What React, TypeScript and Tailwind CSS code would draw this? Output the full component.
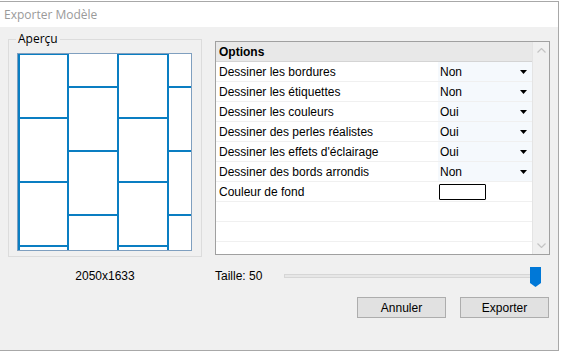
const rows: { label: string; value?: string }[] = [
  { label: 'Dessiner les bordures', value: 'Non' },
  { label: 'Dessiner les étiquettes', value: 'Non' },
  { label: 'Dessiner les couleurs', value: 'Oui' },
  { label: 'Dessiner des perles réalistes', value: 'Oui' },
  { label: "Dessiner les effets d'éclairage", value: 'Oui' },
  { label: 'Dessiner des bords arrondis', value: 'Non' },
  { label: 'Couleur de fond' },
  { label: '' },
  { label: '' },
];

function Preview() {
  const blue = '#0a7ec2';
  // staggered brick pattern, columns 50px wide, rows 64px tall
  const cols = [
    { x1: 1, x2: 51, ys: [1, 65, 129, 193] },
    { x1: 51, x2: 101, ys: [34, 98, 162] },
    { x1: 101, x2: 151, ys: [1, 65, 129, 193] },
    { x1: 151, x2: 175, ys: [34, 98, 162] },
  ];
  return (
    <svg width="175" height="198" viewBox="0 0 175 198" className="block">
      <rect x="0" y="0" width="175" height="198" fill="#ffffff" />
      {cols.map((c, i) =>
        c.ys.map((y) => <line key={`${i}-${y}`} x1={c.x1} x2={c.x2} y1={y} y2={y} stroke={blue} strokeWidth="2" />)
      )}
      <line x1="2" x2="2" y1="0" y2="198" stroke={blue} strokeWidth="2" />
      <line x1="51" x2="51" y1="0" y2="198" stroke={blue} strokeWidth="2" />
      <line x1="101" x2="101" y1="0" y2="198" stroke={blue} strokeWidth="2" />
      <line x1="151" x2="151" y1="0" y2="198" stroke={blue} strokeWidth="2" />
      <rect x="0.5" y="0.5" width="174" height="197" fill="none" stroke="#7f9fbf" strokeWidth="1" />
      {/* top of col 2/4 has no blue edge */}
      <line x1="52" x2="100" y1="0.5" y2="0.5" stroke="#7f9fbf" strokeWidth="1" />
      <line x1="152" x2="175" y1="0.5" y2="0.5" stroke="#7f9fbf" strokeWidth="1" />
    </svg>
  );
}

function DropArrow() {
  return (
    <svg width="7" height="4" viewBox="0 0 7 4" className="block">
      <path d="M0 0H7L3.5 4Z" fill="#000" />
    </svg>
  );
}

export default function App() {
  return (
    <div className="w-[561px] h-[351px] bg-white overflow-hidden" style={{ fontFamily: '"Liberation Sans", Arial, sans-serif' }}>
      <div className="mt-[1px] w-[559px] h-[350px] border-t border-r border-b border-[#a8a8a8] flex flex-col">
        {/* Title bar */}
        <div className="h-[25px] bg-white flex items-center pl-[4px] text-[12px] text-[#9a9a9a]" style={{ fontFamily: '"Open Sans", "Noto Sans", sans-serif' }}>
          Exporter Modèle
        </div>

        {/* Body */}
        <div className="flex-1 bg-[#f0f0f0] flex flex-col text-[12px] text-black">
          <div className="flex pt-[12px] pl-[8px]">
            {/* Aperçu group */}
            <div className="relative w-[194px] h-[218px] border border-[#dcdcdc] pt-[13px] pl-[8px]">
              <span className="absolute left-[7px] top-[-9px] bg-[#f0f0f0] px-[2px] leading-[16px] text-[12px]" style={{ fontFamily: '"Open Sans", "Noto Sans", sans-serif' }}>
                Aperçu
              </span>
              <Preview />
            </div>

            {/* Options grid */}
            <div className="ml-[13px] mt-[2px] w-[335px] h-[214px] border border-[#a0a0a0] bg-white flex">
              <div className="w-[316px] flex flex-col">
                <div className="h-[20px] bg-[#e8e8e8] border-b border-[#d4d4d4] flex items-center pl-[3px] font-bold">Options</div>
                {rows.map((r, i) => (
                  <div key={i} className="h-[20px] flex border-b border-[#f0f0f0]">
                    <div className="w-[222px] flex items-center pl-[3px] whitespace-nowrap">{r.label}</div>
                    {r.value ? (
                      <div className="flex-1 flex items-center justify-between pl-[2px] pr-[5px] bg-[#f5f9fd]">
                        <span>{r.value}</span>
                        <DropArrow />
                      </div>
                    ) : r.label ? (
                      <div className="flex-1 flex items-center pl-[1px]">
                        <div className="w-[47px] h-[16px] border border-black rounded-[1px] bg-white" />
                      </div>
                    ) : (
                      <div className="flex-1" />
                    )}
                  </div>
                ))}
              </div>
              <div className="flex-1 bg-[#f0f0f0] border-l border-[#e4e4e4] flex flex-col items-center justify-between py-[6px]">
                <svg width="9" height="5" viewBox="0 0 9 5" className="block">
                  <path d="M0.5 4.5L4.5 0.5L8.5 4.5" fill="none" stroke="#c4c4c4" strokeWidth="1.2" />
                </svg>
                <svg width="9" height="5" viewBox="0 0 9 5" className="block">
                  <path d="M0.5 0.5L4.5 4.5L8.5 0.5" fill="none" stroke="#c4c4c4" strokeWidth="1.2" />
                </svg>
              </div>
            </div>
          </div>

          {/* Size row */}
          <div className="flex mt-[9px] h-[20px] items-center">
            <div className="w-[210px] pl-[8px] text-center">
              <div className="w-[194px]">2050x1633</div>
            </div>
            <div className="ml-[5px] w-[69px]">Taille: 50</div>
            <div className="relative w-[257px] h-[20px] flex items-center">
              <div className="w-[252px] h-[4px] bg-[#e7e7e7] border border-[#d6d6d6]" />
              <svg width="11" height="20" viewBox="0 0 11 20" className="absolute left-[246px] top-[1px] block">
                <path d="M0 0H11V16L5.5 20L0 16Z" fill="#0078d7" />
              </svg>
            </div>
          </div>

          {/* Buttons */}
          <div className="flex justify-end gap-[14px] pr-[9px] mt-[11px]">
            <button className="w-[89px] h-[21px] bg-[#e1e1e1] border border-[#adadad] text-[12px] leading-none">Annuler</button>
            <button className="w-[89px] h-[21px] bg-[#e1e1e1] border border-[#adadad] text-[12px] leading-none">Exporter</button>
          </div>
        </div>
      </div>
    </div>
  );
}
